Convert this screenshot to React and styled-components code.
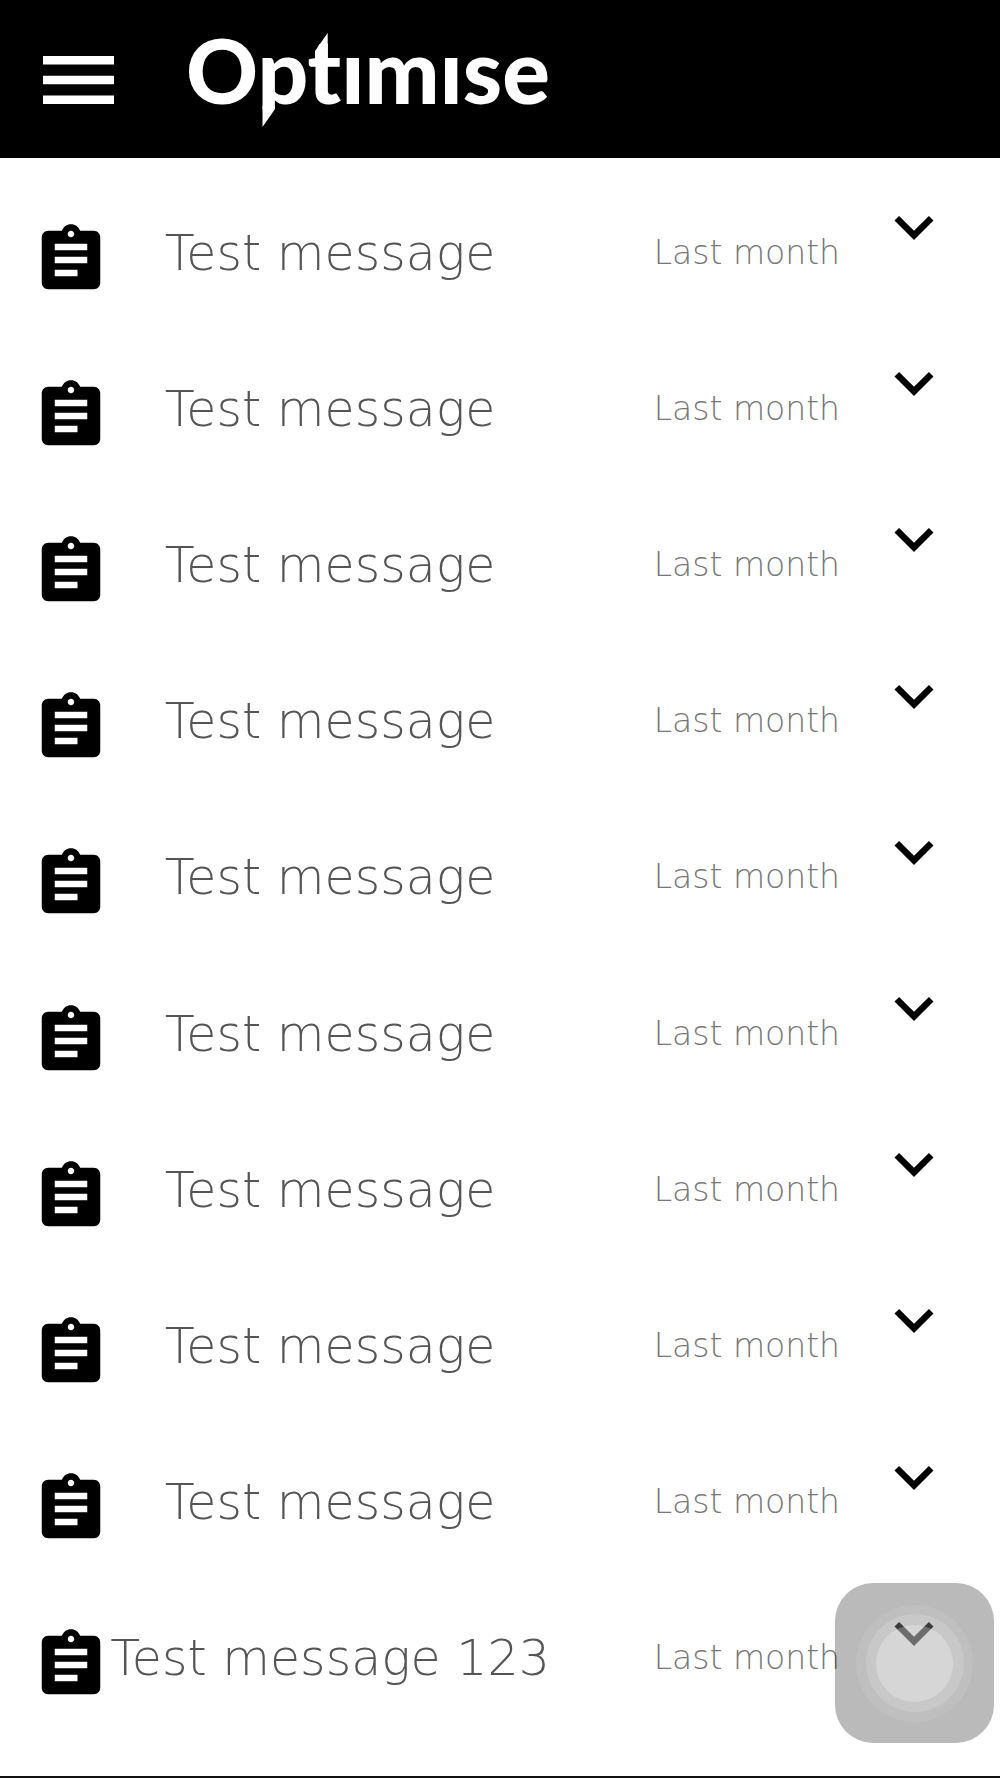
import styled, { createGlobalStyle } from 'styled-components'
import { MdAssignment, MdKeyboardArrowDown } from 'react-icons/md'

const GlobalStyle = createGlobalStyle`
  * {
    box-sizing: border-box;
  }
  body {
    margin: 0;
    background: #fff;
    color: #000;
    font-family: 'DejaVu Sans', sans-serif;
    font-weight: 200;
  }
`;

const Page = styled.div`
  display: flex;
  flex-direction: column;
  min-height: 100vh;
  border-bottom: 2px solid #111;
`;

const Header = styled.header`
  display: flex;
  align-items: center;
  gap: 72px;
  height: 158px;
  padding: 0 43px;
  background: #000;
`;

const IconButton = styled.button`
  display: flex;
  padding: 0;
  border: none;
  background: none;
  color: inherit;
  cursor: pointer;
`;

const MenuButton = styled(IconButton)`
  margin-top: 2px;
  color: #fff;
`;

const Logo = styled.a`
  position: relative;
  margin-bottom: 18px;
  color: #fff;
  font: 900 89px/104px Lato, sans-serif;
  font-variant-ligatures: none;
  text-decoration: none;
`;

// pointed tail of the p and pointed top of the t
const LogoSpikes = styled.svg`
  position: absolute;
  top: 0;
  left: 0;
  overflow: visible;
`;

const List = styled.ul`
  flex: 1;
  display: grid;
  grid-auto-rows: 1fr;
  margin: 0;
  padding: 16px 0 40px;
  list-style: none;
`;

const Row = styled.li`
  display: grid;
  grid-template-columns: 11fr 44fr 29fr 16fr;
  align-items: center;
`;

const RowIcon = styled.span`
  display: flex;
  justify-content: flex-end;
  padding-top: 15px;
`;

const Title = styled.span`
  padding-top: 2px;
  color: #555;
  font-size: 49px;
  text-align: center;
  white-space: nowrap;
`;

const When = styled.time`
  color: #777;
  font-size: 33px;
  text-align: right;
`;

const Toggle = styled(IconButton)`
  align-self: start;
  justify-self: center;
  margin-right: 12px;
  padding-top: 14px;
`;

// floating assistive button, sits over the list
const Assist = styled.button`
  position: fixed;
  right: 6px;
  bottom: 35px;
  display: grid;
  place-items: center;
  width: 159px;
  height: 160px;
  padding: 0;
  border: none;
  border-radius: 38px;
  background: rgba(32, 32, 32, 0.31);
`;

const Ring = styled.span`
  display: grid;
  place-items: center;
  width: ${(p) => p.$size}px;
  height: ${(p) => p.$size}px;
  border-radius: 50%;
  background: rgba(255, 255, 255, ${(p) => p.$alpha});
`;

const messages = [
    ...Array(9).fill('Test message'),
    'Test message 123',
]

const Message = ({ title }) => {
    return (
        <Row>
            <RowIcon><MdAssignment size={78} /></RowIcon>
            <Title>{title}</Title>
            <When>Last month</When>
            <Toggle aria-label='Expand message'>
                <MdKeyboardArrowDown size={78} />
            </Toggle>
        </Row>
    )
}

const App = () => {
    return (
        <Page>
            <GlobalStyle />
            <Header>
                <MenuButton aria-label='Menu'>
                    <svg width='71' height='48' viewBox='0 0 71 48' fill='currentColor'>
                        <path d='M0 0h71v8.5H0zM0 19.8h71v8.5H0zM0 39.5h71V48H0z' />
                    </svg>
                </MenuButton>
                <Logo href='#' aria-label='Optimise'>
                    Optımıse
                    <LogoSpikes width='360' height='110' viewBox='0 0 360 110'>
                        <path fill='#000' d='M75 91h15v12H75z' />
                        <path fill='#fff' d='M76.5 88h12.2v3.5L76.5 109zM141.7 15v27H129V33z' />
                    </LogoSpikes>
                </Logo>
            </Header>
            <List>
                {messages.map((title, i) => <Message key={i} title={title} />)}
            </List>
            <Assist aria-label='Assistive menu'>
                <Ring $size={117} $alpha={0.07}>
                    <Ring $size={98} $alpha={0.14}>
                        <Ring $size={77} $alpha={0.26} />
                    </Ring>
                </Ring>
            </Assist>
        </Page>
    )
}

export default App;
